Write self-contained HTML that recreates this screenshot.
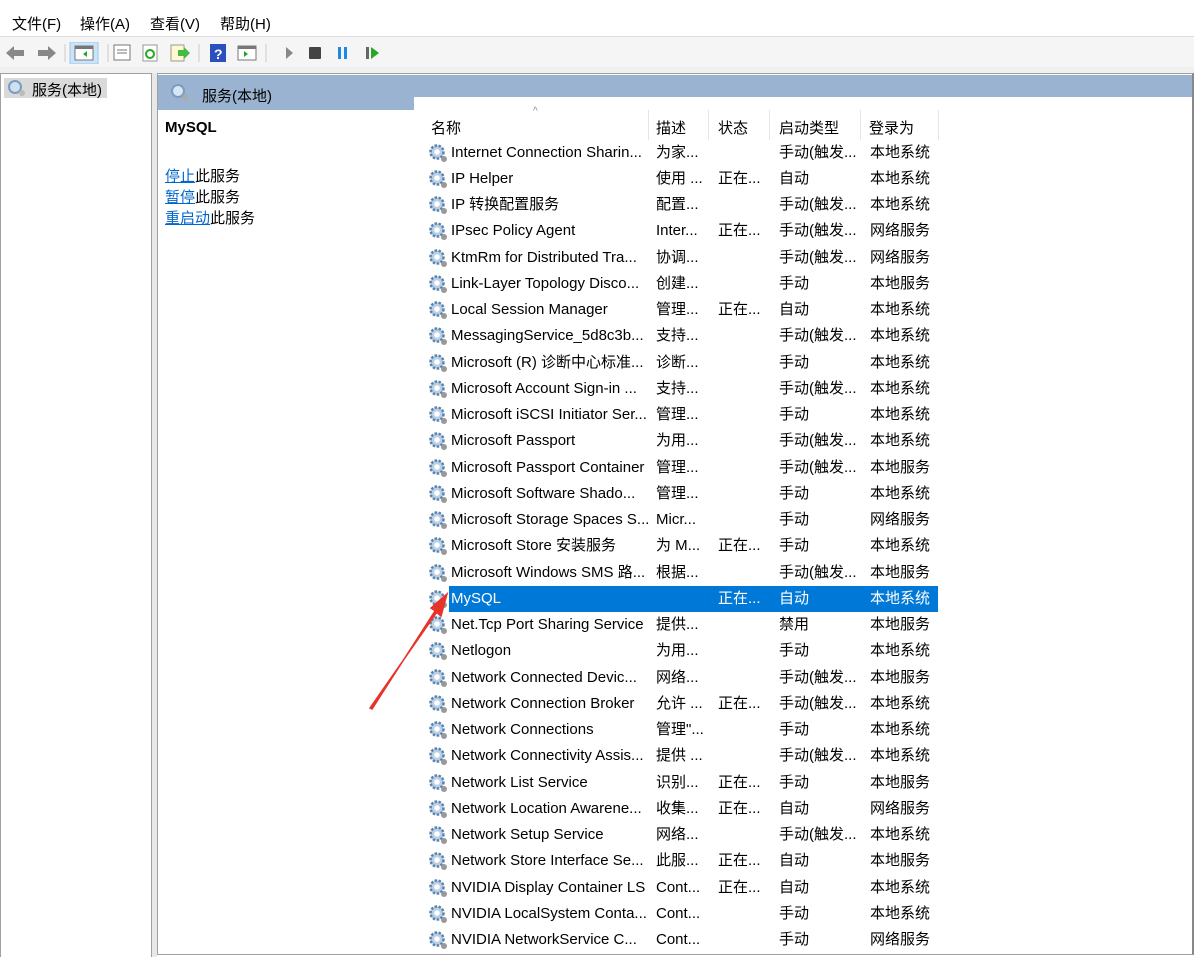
<!DOCTYPE html>
<html><head><meta charset="utf-8"><style>
*{margin:0;padding:0;box-sizing:border-box}
body{width:1194px;height:957px;overflow:hidden;background:#fff;font-family:"Liberation Sans","Noto Sans CJK SC",sans-serif;font-size:15px;color:#000;position:relative}
.a{position:absolute;white-space:nowrap}
.menu span{position:absolute;top:13px;font-size:15px}
.row{position:absolute;left:424px;width:514px;height:26px}
.row span{position:absolute;top:0;height:26px;line-height:26px;white-space:nowrap;overflow:hidden}
.row .n{left:27px;width:198px}
.row .d{left:232px;width:56px}
.row .s{left:294px}
.row .t{left:355px}
.row .l{left:446px}
.row svg{position:absolute;left:4px;top:3px}
.bg{position:absolute;left:25px;right:0;top:0;bottom:0;background:#0078d7}
a{color:#0066cc;text-decoration:underline}
</style></head><body>
<div class="menu"><span style="left:12px">文件(F)</span><span style="left:80px">操作(A)</span><span style="left:150px">查看(V)</span><span style="left:220px">帮助(H)</span></div>
<div class="a" style="left:0;top:36px;width:1194px;height:1px;background:#ddd"></div>
<div class="a" style="left:0;top:37px;width:1194px;height:30px;background:#f5f5f5"></div>
<svg class="a" style="left:4px;top:42px" width="400" height="22">
<path d="M2 11 L10 4 V8 H20 V14 H10 V18Z" fill="#888"/>
<path d="M52 11 L44 4 V8 H34 V14 H44 V18Z" fill="#888"/>
<line x1="61" y1="2" x2="61" y2="20" stroke="#ccc"/>
<rect x="66" y="0" width="28" height="22" fill="#cce4f7" stroke="#99c9ef"/>
<rect x="71" y="4" width="18" height="14" fill="#fff" stroke="#777"/><rect x="71" y="4" width="18" height="3" fill="#777"/><path d="M83 9 L79 12 L83 15Z" fill="#2a2"/>
<line x1="104" y1="2" x2="104" y2="20" stroke="#ccc"/>
<rect x="110" y="3" width="16" height="15" fill="#fff" stroke="#777"/><line x1="113" y1="8" x2="123" y2="8" stroke="#777"/><line x1="113" y1="11" x2="123" y2="11" stroke="#777"/>
<rect x="139" y="3" width="14" height="16" fill="#fff" stroke="#999"/><circle cx="146" cy="12" r="4" fill="none" stroke="#2a2" stroke-width="2"/>
<rect x="167" y="3" width="13" height="16" fill="#fff8d0" stroke="#999"/><path d="M174 8 H180 V5 L186 11 L180 17 V14 H174Z" fill="#4b4"/>
<line x1="195" y1="2" x2="195" y2="20" stroke="#ccc"/>
<rect x="206" y="2" width="16" height="18" fill="#2b4fbf"/><text x="210" y="17" fill="#fff" font-size="14" font-weight="bold">?</text>
<rect x="234" y="4" width="18" height="14" fill="#fff" stroke="#777"/><rect x="234" y="4" width="18" height="3" fill="#777"/><path d="M240 9 L244 12 L240 15Z" fill="#2a2"/>
<line x1="262" y1="2" x2="262" y2="20" stroke="#ccc"/>
<path d="M282 5 L289 11 L282 17Z" fill="#888"/>
<rect x="305" y="5" width="12" height="12" rx="1" fill="#444"/>
<rect x="334" y="5" width="3" height="12" fill="#1e88e5"/><rect x="340" y="5" width="3" height="12" fill="#1e88e5"/>
<rect x="362" y="5" width="3" height="12" fill="#666"/><path d="M367 5 L375 11 L367 17Z" fill="#2a2"/>
</svg>
<div class="a" style="left:0;top:67px;width:1194px;height:6px;background:#f0f0f0"></div>
<div class="a" style="left:0;top:73px;width:152px;height:884px;background:#fff;border:1px solid #a0a0a0;border-bottom:none"></div>
<div class="a" style="left:152px;top:73px;width:5px;height:884px;background:#e8e8e8"></div>
<div class="a" style="left:4px;top:78px;width:103px;height:20px;background:#d9d9d9"></div>
<svg class="a" style="left:7px;top:79px" width="20" height="18"><circle cx="8" cy="8" r="6" fill="#cfe0f0" stroke="#7a9cc0" stroke-width="2"/><circle cx="15" cy="14" r="3" fill="#bbb"/></svg>
<div class="a" style="left:32px;top:79px">服务(本地)</div>
<div class="a" style="left:157px;top:73px;width:1037px;height:882px;border:1px solid #a0a0a0;border-right:2px solid #888;background:#fff"></div>
<div class="a" style="left:158px;top:75px;width:1034px;height:22px;background:#9ab3d0"></div>
<div class="a" style="left:158px;top:97px;width:256px;height:13px;background:#9ab3d0"></div>
<svg class="a" style="left:170px;top:83px" width="22" height="20"><circle cx="8" cy="8" r="6" fill="#d8e6f4" stroke="#7a9cc0" stroke-width="2"/><circle cx="15" cy="14" r="3" fill="#aaa"/></svg>
<div class="a" style="left:202px;top:85px">服务(本地)</div>
<div class="a" style="left:165px;top:119px;font-weight:bold">MySQL</div>
<div class="a" style="left:165px;top:165px"><a>停止</a>此服务</div>
<div class="a" style="left:165px;top:186px"><a>暂停</a>此服务</div>
<div class="a" style="left:165px;top:207px"><a>重启动</a>此服务</div>
<div class="a" style="left:533px;top:106px;font-size:10px;color:#888">^</div>
<div class="a" style="left:431px;top:117px">名称</div>
<div class="a" style="left:656px;top:117px">描述</div>
<div class="a" style="left:718px;top:117px">状态</div>
<div class="a" style="left:779px;top:117px">启动类型</div>
<div class="a" style="left:869px;top:117px">登录为</div>
<div class="a" style="left:648px;top:110px;width:1px;height:30px;background:#e5e5e5"></div>
<div class="a" style="left:708px;top:110px;width:1px;height:30px;background:#e5e5e5"></div>
<div class="a" style="left:769px;top:110px;width:1px;height:30px;background:#e5e5e5"></div>
<div class="a" style="left:860px;top:110px;width:1px;height:30px;background:#e5e5e5"></div>
<div class="a" style="left:938px;top:110px;width:1px;height:30px;background:#e5e5e5"></div>
<svg width="0" height="0" style="position:absolute"><defs><g id="g"><circle cx="9" cy="9" r="6.5" fill="#b8cfe6" stroke="#5b82ad" stroke-width="2.5" stroke-dasharray="2.5 1.5"/><circle cx="9" cy="9" r="2.8" fill="#fff"/><circle cx="16" cy="16" r="3" fill="#999"/></g></defs></svg>
<div class="row" style="top:140px"><svg width="22" height="22"><use href="#g"/></svg><span class="n">Internet Connection Sharin...</span><span class="d">为家...</span><span class="t">手动(触发...</span><span class="l">本地系统</span></div>
<div class="row" style="top:166px"><svg width="22" height="22"><use href="#g"/></svg><span class="n">IP Helper</span><span class="d">使用 ...</span><span class="s">正在...</span><span class="t">自动</span><span class="l">本地系统</span></div>
<div class="row" style="top:192px"><svg width="22" height="22"><use href="#g"/></svg><span class="n">IP 转换配置服务</span><span class="d">配置...</span><span class="t">手动(触发...</span><span class="l">本地系统</span></div>
<div class="row" style="top:218px"><svg width="22" height="22"><use href="#g"/></svg><span class="n">IPsec Policy Agent</span><span class="d">Inter...</span><span class="s">正在...</span><span class="t">手动(触发...</span><span class="l">网络服务</span></div>
<div class="row" style="top:245px"><svg width="22" height="22"><use href="#g"/></svg><span class="n">KtmRm for Distributed Tra...</span><span class="d">协调...</span><span class="t">手动(触发...</span><span class="l">网络服务</span></div>
<div class="row" style="top:271px"><svg width="22" height="22"><use href="#g"/></svg><span class="n">Link-Layer Topology Disco...</span><span class="d">创建...</span><span class="t">手动</span><span class="l">本地服务</span></div>
<div class="row" style="top:297px"><svg width="22" height="22"><use href="#g"/></svg><span class="n">Local Session Manager</span><span class="d">管理...</span><span class="s">正在...</span><span class="t">自动</span><span class="l">本地系统</span></div>
<div class="row" style="top:323px"><svg width="22" height="22"><use href="#g"/></svg><span class="n">MessagingService_5d8c3b...</span><span class="d">支持...</span><span class="t">手动(触发...</span><span class="l">本地系统</span></div>
<div class="row" style="top:350px"><svg width="22" height="22"><use href="#g"/></svg><span class="n">Microsoft (R) 诊断中心标准...</span><span class="d">诊断...</span><span class="t">手动</span><span class="l">本地系统</span></div>
<div class="row" style="top:376px"><svg width="22" height="22"><use href="#g"/></svg><span class="n">Microsoft Account Sign-in ...</span><span class="d">支持...</span><span class="t">手动(触发...</span><span class="l">本地系统</span></div>
<div class="row" style="top:402px"><svg width="22" height="22"><use href="#g"/></svg><span class="n">Microsoft iSCSI Initiator Ser...</span><span class="d">管理...</span><span class="t">手动</span><span class="l">本地系统</span></div>
<div class="row" style="top:428px"><svg width="22" height="22"><use href="#g"/></svg><span class="n">Microsoft Passport</span><span class="d">为用...</span><span class="t">手动(触发...</span><span class="l">本地系统</span></div>
<div class="row" style="top:455px"><svg width="22" height="22"><use href="#g"/></svg><span class="n">Microsoft Passport Container</span><span class="d">管理...</span><span class="t">手动(触发...</span><span class="l">本地服务</span></div>
<div class="row" style="top:481px"><svg width="22" height="22"><use href="#g"/></svg><span class="n">Microsoft Software Shado...</span><span class="d">管理...</span><span class="t">手动</span><span class="l">本地系统</span></div>
<div class="row" style="top:507px"><svg width="22" height="22"><use href="#g"/></svg><span class="n">Microsoft Storage Spaces S...</span><span class="d">Micr...</span><span class="t">手动</span><span class="l">网络服务</span></div>
<div class="row" style="top:533px"><svg width="22" height="22"><use href="#g"/></svg><span class="n">Microsoft Store 安装服务</span><span class="d">为 M...</span><span class="s">正在...</span><span class="t">手动</span><span class="l">本地系统</span></div>
<div class="row" style="top:560px"><svg width="22" height="22"><use href="#g"/></svg><span class="n">Microsoft Windows SMS 路...</span><span class="d">根据...</span><span class="t">手动(触发...</span><span class="l">本地服务</span></div>
<div class="row" style="top:586px;color:#fff"><div class="bg"></div><svg width="22" height="22"><use href="#g"/></svg><span class="n">MySQL</span><span class="s">正在...</span><span class="t">自动</span><span class="l">本地系统</span></div>
<div class="row" style="top:612px"><svg width="22" height="22"><use href="#g"/></svg><span class="n">Net.Tcp Port Sharing Service</span><span class="d">提供...</span><span class="t">禁用</span><span class="l">本地服务</span></div>
<div class="row" style="top:638px"><svg width="22" height="22"><use href="#g"/></svg><span class="n">Netlogon</span><span class="d">为用...</span><span class="t">手动</span><span class="l">本地系统</span></div>
<div class="row" style="top:665px"><svg width="22" height="22"><use href="#g"/></svg><span class="n">Network Connected Devic...</span><span class="d">网络...</span><span class="t">手动(触发...</span><span class="l">本地服务</span></div>
<div class="row" style="top:691px"><svg width="22" height="22"><use href="#g"/></svg><span class="n">Network Connection Broker</span><span class="d">允许 ...</span><span class="s">正在...</span><span class="t">手动(触发...</span><span class="l">本地系统</span></div>
<div class="row" style="top:717px"><svg width="22" height="22"><use href="#g"/></svg><span class="n">Network Connections</span><span class="d">管理"...</span><span class="t">手动</span><span class="l">本地系统</span></div>
<div class="row" style="top:743px"><svg width="22" height="22"><use href="#g"/></svg><span class="n">Network Connectivity Assis...</span><span class="d">提供 ...</span><span class="t">手动(触发...</span><span class="l">本地系统</span></div>
<div class="row" style="top:770px"><svg width="22" height="22"><use href="#g"/></svg><span class="n">Network List Service</span><span class="d">识别...</span><span class="s">正在...</span><span class="t">手动</span><span class="l">本地服务</span></div>
<div class="row" style="top:796px"><svg width="22" height="22"><use href="#g"/></svg><span class="n">Network Location Awarene...</span><span class="d">收集...</span><span class="s">正在...</span><span class="t">自动</span><span class="l">网络服务</span></div>
<div class="row" style="top:822px"><svg width="22" height="22"><use href="#g"/></svg><span class="n">Network Setup Service</span><span class="d">网络...</span><span class="t">手动(触发...</span><span class="l">本地系统</span></div>
<div class="row" style="top:848px"><svg width="22" height="22"><use href="#g"/></svg><span class="n">Network Store Interface Se...</span><span class="d">此服...</span><span class="s">正在...</span><span class="t">自动</span><span class="l">本地服务</span></div>
<div class="row" style="top:875px"><svg width="22" height="22"><use href="#g"/></svg><span class="n">NVIDIA Display Container LS</span><span class="d">Cont...</span><span class="s">正在...</span><span class="t">自动</span><span class="l">本地系统</span></div>
<div class="row" style="top:901px"><svg width="22" height="22"><use href="#g"/></svg><span class="n">NVIDIA LocalSystem Conta...</span><span class="d">Cont...</span><span class="t">手动</span><span class="l">本地系统</span></div>
<div class="row" style="top:927px"><svg width="22" height="22"><use href="#g"/></svg><span class="n">NVIDIA NetworkService C...</span><span class="d">Cont...</span><span class="t">手动</span><span class="l">网络服务</span></div>
<svg class="a" style="left:0;top:0" width="1194" height="957"><path d="M370 708 L437 612 L431 608 L447 594 L441 616 L435 611 L372 709Z" fill="#e8332a" stroke="#e8332a" stroke-width="1.5"/></svg>
</body></html>
